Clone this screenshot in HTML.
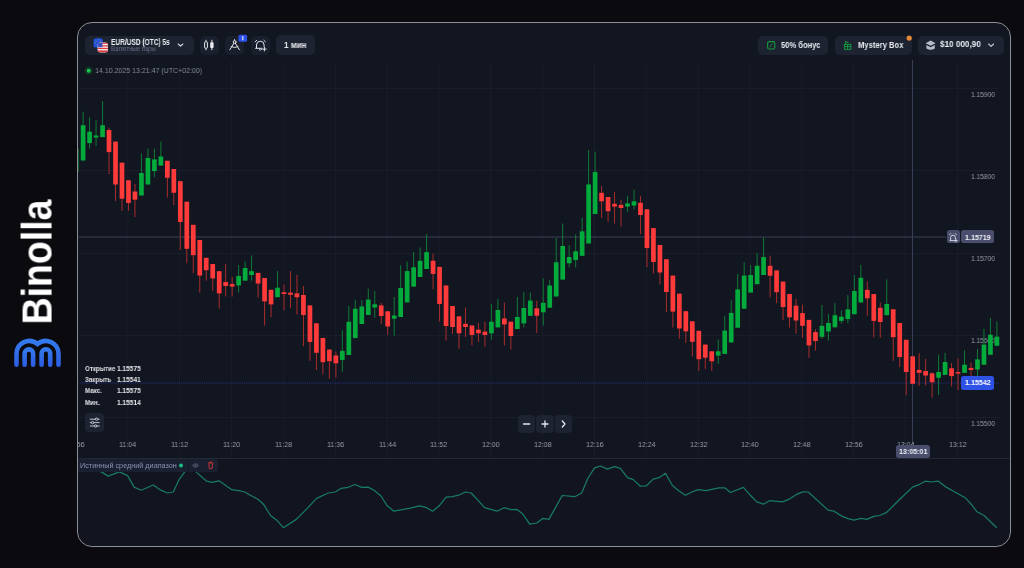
<!DOCTYPE html>
<html><head><meta charset="utf-8">
<style>
*{margin:0;padding:0;box-sizing:border-box}
html,body{width:1024px;height:568px;overflow:hidden;background:#0a0a0f;font-family:"Liberation Sans",sans-serif}
.abs{position:absolute}
#frame{position:absolute;left:77px;top:22px;width:934px;height:525px;border:1.7px solid #8e8e96;border-radius:15px;background:#121620}
svg{position:absolute;left:0;top:0}
.pill{position:absolute;background:#1d2331;border-radius:5px}
.btn{position:absolute;background:#1a1f2d;border-radius:5px}
.t{position:absolute;white-space:nowrap;line-height:1;transform-origin:0 0;will-change:transform}
</style></head><body>
<div class="t" style="left:0;top:0;font-size:41.6px;font-weight:bold;color:#fff;transform:translate(16.57px,324.4px) rotate(-90deg) scaleX(0.9)">Binolla</div>
<svg width="1024" height="568" viewBox="0 0 1024 568">
 <defs><linearGradient id="lg" x1="0" y1="0" x2="0" y2="1"><stop offset="0" stop-color="#3479ec"/><stop offset="1" stop-color="#2d5fe4"/></linearGradient></defs>
 <g fill="none" stroke="url(#lg)" stroke-width="4.6" stroke-linecap="round">
  <path d="M16.5,364.7 V353.8 A12.8,12.8 0 0 1 37.5,343.97 A12.8,12.8 0 0 1 58.5,353.8 V364.7"/>
  <path d="M24.6,364.7 V353.6 A4.25,4.25 0 0 1 33.1,353.6 V364.7"/>
  <path d="M41.6,364.7 V353.6 A4.3,4.3 0 0 1 50.2,353.6 V364.7"/>
 </g>
</svg>
<div id="frame"></div>
<svg width="1024" height="568" viewBox="0 0 1024 568">
 <defs><clipPath id="fc"><rect x="78.5" y="23.5" width="931" height="522" rx="14"/></clipPath></defs>
 <g clip-path="url(#fc)">
 <rect x="78" y="459" width="932" height="88" fill="#121420"/>
 <line x1="78" y1="88.5" x2="998" y2="88.5" stroke="#1a1d2b" stroke-width="1"/>
<line x1="78" y1="170.5" x2="998" y2="170.5" stroke="#1a1d2b" stroke-width="1"/>
<line x1="78" y1="253.5" x2="998" y2="253.5" stroke="#1a1d2b" stroke-width="1"/>
<line x1="78" y1="335.5" x2="998" y2="335.5" stroke="#1a1d2b" stroke-width="1"/>
<line x1="78" y1="417.5" x2="998" y2="417.5" stroke="#1a1d2b" stroke-width="1"/>
<line x1="127.9" y1="61" x2="127.9" y2="458" stroke="#1a1d2b" stroke-width="1"/>
<line x1="179.7" y1="61" x2="179.7" y2="458" stroke="#1a1d2b" stroke-width="1"/>
<line x1="231.6" y1="61" x2="231.6" y2="458" stroke="#1a1d2b" stroke-width="1"/>
<line x1="283.4" y1="61" x2="283.4" y2="458" stroke="#1a1d2b" stroke-width="1"/>
<line x1="335.3" y1="61" x2="335.3" y2="458" stroke="#1a1d2b" stroke-width="1"/>
<line x1="387.1" y1="61" x2="387.1" y2="458" stroke="#1a1d2b" stroke-width="1"/>
<line x1="439.0" y1="61" x2="439.0" y2="458" stroke="#1a1d2b" stroke-width="1"/>
<line x1="490.8" y1="61" x2="490.8" y2="458" stroke="#1a1d2b" stroke-width="1"/>
<line x1="542.7" y1="61" x2="542.7" y2="458" stroke="#1a1d2b" stroke-width="1"/>
<line x1="594.5" y1="61" x2="594.5" y2="458" stroke="#1a1d2b" stroke-width="1"/>
<line x1="646.3" y1="61" x2="646.3" y2="458" stroke="#1a1d2b" stroke-width="1"/>
<line x1="698.2" y1="61" x2="698.2" y2="458" stroke="#1a1d2b" stroke-width="1"/>
<line x1="750.0" y1="61" x2="750.0" y2="458" stroke="#1a1d2b" stroke-width="1"/>
<line x1="801.9" y1="61" x2="801.9" y2="458" stroke="#1a1d2b" stroke-width="1"/>
<line x1="853.7" y1="61" x2="853.7" y2="458" stroke="#1a1d2b" stroke-width="1"/>
<line x1="905.6" y1="61" x2="905.6" y2="458" stroke="#1a1d2b" stroke-width="1"/>
<line x1="957.4" y1="61" x2="957.4" y2="458" stroke="#1a1d2b" stroke-width="1"/>
 <line x1="78" y1="458.5" x2="1010" y2="458.5" stroke="#232837" stroke-width="1"/>
 <line x1="78" y1="237" x2="946" y2="237" stroke="#3b3f55" stroke-width="1"/>
 <line x1="912.5" y1="60" x2="912.5" y2="445" stroke="#3b3f55" stroke-width="1"/>
 <line x1="78" y1="383" x2="1000" y2="383" stroke="#26307e" stroke-width="1.2" stroke-dasharray="1.2 0.9"/>
 </g>
</svg>
<div style="position:absolute;left:0;top:0;width:1024px;height:568px;clip-path:inset(23.5px 13px 21px 78.5px round 14px)">
<div class="t" style="left:970.96px;top:90.51px;font-size:7.25px;font-weight:normal;color:#9a9fab;transform:scaleX(0.910);">1.15900</div>
<div class="t" style="left:970.96px;top:172.76px;font-size:7.25px;font-weight:normal;color:#9a9fab;transform:scaleX(0.910);">1.15800</div>
<div class="t" style="left:970.96px;top:255.01px;font-size:7.25px;font-weight:normal;color:#9a9fab;transform:scaleX(0.910);">1.15700</div>
<div class="t" style="left:970.96px;top:337.26px;font-size:7.25px;font-weight:normal;color:#9a9fab;transform:scaleX(0.910);">1.15600</div>
<div class="t" style="left:970.96px;top:419.51px;font-size:7.25px;font-weight:normal;color:#9a9fab;transform:scaleX(0.910);">1.15500</div>
<div class="t" style="left:67.46px;top:440.50px;font-size:7.97px;font-weight:normal;color:#9a9fab;transform:scaleX(0.881);">10:56</div>
<div class="t" style="left:119.31px;top:440.50px;font-size:7.97px;font-weight:normal;color:#9a9fab;transform:scaleX(0.881);">11:04</div>
<div class="t" style="left:171.16px;top:440.50px;font-size:7.97px;font-weight:normal;color:#9a9fab;transform:scaleX(0.881);">11:12</div>
<div class="t" style="left:223.01px;top:440.50px;font-size:7.97px;font-weight:normal;color:#9a9fab;transform:scaleX(0.881);">11:20</div>
<div class="t" style="left:274.85px;top:440.50px;font-size:7.97px;font-weight:normal;color:#9a9fab;transform:scaleX(0.881);">11:28</div>
<div class="t" style="left:326.70px;top:440.50px;font-size:7.97px;font-weight:normal;color:#9a9fab;transform:scaleX(0.881);">11:36</div>
<div class="t" style="left:378.55px;top:440.50px;font-size:7.97px;font-weight:normal;color:#9a9fab;transform:scaleX(0.881);">11:44</div>
<div class="t" style="left:430.40px;top:440.50px;font-size:7.97px;font-weight:normal;color:#9a9fab;transform:scaleX(0.881);">11:52</div>
<div class="t" style="left:482.25px;top:440.50px;font-size:7.97px;font-weight:normal;color:#9a9fab;transform:scaleX(0.881);">12:00</div>
<div class="t" style="left:534.09px;top:440.50px;font-size:7.97px;font-weight:normal;color:#9a9fab;transform:scaleX(0.881);">12:08</div>
<div class="t" style="left:585.94px;top:440.50px;font-size:7.97px;font-weight:normal;color:#9a9fab;transform:scaleX(0.881);">12:16</div>
<div class="t" style="left:637.79px;top:440.50px;font-size:7.97px;font-weight:normal;color:#9a9fab;transform:scaleX(0.881);">12:24</div>
<div class="t" style="left:689.64px;top:440.50px;font-size:7.97px;font-weight:normal;color:#9a9fab;transform:scaleX(0.881);">12:32</div>
<div class="t" style="left:741.49px;top:440.50px;font-size:7.97px;font-weight:normal;color:#9a9fab;transform:scaleX(0.881);">12:40</div>
<div class="t" style="left:793.33px;top:440.50px;font-size:7.97px;font-weight:normal;color:#9a9fab;transform:scaleX(0.881);">12:48</div>
<div class="t" style="left:845.18px;top:440.50px;font-size:7.97px;font-weight:normal;color:#9a9fab;transform:scaleX(0.881);">12:56</div>
<div class="t" style="left:897.03px;top:440.50px;font-size:7.97px;font-weight:normal;color:#9a9fab;transform:scaleX(0.881);">13:04</div>
<div class="t" style="left:948.88px;top:440.50px;font-size:7.97px;font-weight:normal;color:#9a9fab;transform:scaleX(0.881);">13:12</div>
</div>
<svg width="1024" height="568" viewBox="0 0 1024 568">
 <g clip-path="url(#fc)">
 <rect x="74.27" y="148.60" width="4.7" height="23.00" fill="#03aa3c"/>
<rect x="82.60" y="111.70" width="1" height="48.80" fill="#0f7a35"/>
<rect x="80.75" y="125.20" width="4.7" height="35.30" fill="#03aa3c"/>
<rect x="89.08" y="117.30" width="1" height="31.30" fill="#0f7a35"/>
<rect x="87.23" y="131.70" width="4.7" height="11.40" fill="#03aa3c"/>
<rect x="95.56" y="120.10" width="1" height="25.70" fill="#0f7a35"/>
<rect x="93.71" y="135.50" width="4.7" height="2.00" fill="#03aa3c"/>
<rect x="102.04" y="101.10" width="1" height="36.00" fill="#0f7a35"/>
<rect x="100.19" y="125.20" width="4.7" height="11.90" fill="#03aa3c"/>
<rect x="108.52" y="127.60" width="1" height="46.40" fill="#a82c2c"/>
<rect x="106.67" y="130.00" width="4.7" height="22.10" fill="#fe3a3a"/>
<rect x="115.00" y="141.60" width="1" height="59.40" fill="#a82c2c"/>
<rect x="113.16" y="141.60" width="4.7" height="42.90" fill="#fe3a3a"/>
<rect x="121.49" y="162.70" width="1" height="48.30" fill="#a82c2c"/>
<rect x="119.64" y="162.70" width="4.7" height="36.00" fill="#fe3a3a"/>
<rect x="127.97" y="180.30" width="1" height="30.70" fill="#a82c2c"/>
<rect x="126.12" y="180.30" width="4.7" height="22.70" fill="#fe3a3a"/>
<rect x="134.45" y="184.00" width="1" height="33.00" fill="#a82c2c"/>
<rect x="132.60" y="191.50" width="4.7" height="8.20" fill="#fe3a3a"/>
<rect x="140.93" y="153.50" width="1" height="42.00" fill="#0f7a35"/>
<rect x="139.08" y="173.00" width="4.7" height="22.50" fill="#03aa3c"/>
<rect x="147.41" y="148.60" width="1" height="35.90" fill="#0f7a35"/>
<rect x="145.56" y="158.00" width="4.7" height="26.50" fill="#03aa3c"/>
<rect x="153.89" y="148.60" width="1" height="28.70" fill="#0f7a35"/>
<rect x="152.04" y="159.40" width="4.7" height="11.70" fill="#03aa3c"/>
<rect x="160.37" y="141.60" width="1" height="24.00" fill="#0f7a35"/>
<rect x="158.52" y="156.50" width="4.7" height="9.10" fill="#03aa3c"/>
<rect x="166.85" y="160.80" width="1" height="36.70" fill="#a82c2c"/>
<rect x="165.00" y="160.80" width="4.7" height="17.00" fill="#fe3a3a"/>
<rect x="173.33" y="169.00" width="1" height="36.00" fill="#a82c2c"/>
<rect x="171.48" y="169.00" width="4.7" height="23.80" fill="#fe3a3a"/>
<rect x="179.81" y="181.20" width="1" height="68.80" fill="#a82c2c"/>
<rect x="177.97" y="181.20" width="4.7" height="40.80" fill="#fe3a3a"/>
<rect x="186.30" y="201.70" width="1" height="61.60" fill="#a82c2c"/>
<rect x="184.45" y="201.70" width="4.7" height="47.10" fill="#fe3a3a"/>
<rect x="192.78" y="224.80" width="1" height="48.30" fill="#a82c2c"/>
<rect x="190.93" y="224.80" width="4.7" height="30.30" fill="#fe3a3a"/>
<rect x="199.26" y="240.00" width="1" height="52.70" fill="#a82c2c"/>
<rect x="197.41" y="240.00" width="4.7" height="35.50" fill="#fe3a3a"/>
<rect x="205.74" y="257.80" width="1" height="22.90" fill="#a82c2c"/>
<rect x="203.89" y="257.80" width="4.7" height="12.40" fill="#fe3a3a"/>
<rect x="212.22" y="264.00" width="1" height="27.00" fill="#a82c2c"/>
<rect x="210.37" y="264.00" width="4.7" height="14.40" fill="#fe3a3a"/>
<rect x="218.70" y="271.20" width="1" height="37.40" fill="#a82c2c"/>
<rect x="216.85" y="271.20" width="4.7" height="22.20" fill="#fe3a3a"/>
<rect x="225.18" y="263.70" width="1" height="32.80" fill="#a82c2c"/>
<rect x="223.33" y="282.10" width="4.7" height="3.90" fill="#fe3a3a"/>
<rect x="231.66" y="277.00" width="1" height="19.50" fill="#a82c2c"/>
<rect x="229.81" y="284.00" width="4.7" height="2.60" fill="#fe3a3a"/>
<rect x="238.14" y="264.90" width="1" height="27.80" fill="#0f7a35"/>
<rect x="236.29" y="276.00" width="4.7" height="9.40" fill="#03aa3c"/>
<rect x="244.62" y="261.30" width="1" height="19.40" fill="#0f7a35"/>
<rect x="242.78" y="268.00" width="4.7" height="12.70" fill="#03aa3c"/>
<rect x="251.11" y="255.40" width="1" height="25.30" fill="#0f7a35"/>
<rect x="249.26" y="271.20" width="4.7" height="3.80" fill="#03aa3c"/>
<rect x="257.59" y="272.90" width="1" height="24.70" fill="#a82c2c"/>
<rect x="255.74" y="272.90" width="4.7" height="10.60" fill="#fe3a3a"/>
<rect x="264.07" y="278.00" width="1" height="47.50" fill="#a82c2c"/>
<rect x="262.22" y="278.00" width="4.7" height="23.40" fill="#fe3a3a"/>
<rect x="270.55" y="289.80" width="1" height="27.20" fill="#a82c2c"/>
<rect x="268.70" y="289.80" width="4.7" height="14.60" fill="#fe3a3a"/>
<rect x="277.03" y="271.20" width="1" height="26.00" fill="#0f7a35"/>
<rect x="275.18" y="287.70" width="4.7" height="9.50" fill="#03aa3c"/>
<rect x="283.51" y="284.50" width="1" height="25.80" fill="#a82c2c"/>
<rect x="281.66" y="292.30" width="4.7" height="1.70" fill="#fe3a3a"/>
<rect x="289.99" y="271.20" width="1" height="36.80" fill="#a82c2c"/>
<rect x="288.14" y="292.70" width="4.7" height="2.00" fill="#fe3a3a"/>
<rect x="296.47" y="275.00" width="1" height="39.50" fill="#a82c2c"/>
<rect x="294.62" y="293.40" width="4.7" height="3.80" fill="#fe3a3a"/>
<rect x="302.95" y="286.00" width="1" height="60.20" fill="#a82c2c"/>
<rect x="301.10" y="295.00" width="4.7" height="20.00" fill="#fe3a3a"/>
<rect x="309.44" y="305.40" width="1" height="55.40" fill="#a82c2c"/>
<rect x="307.58" y="305.40" width="4.7" height="36.50" fill="#fe3a3a"/>
<rect x="315.92" y="323.30" width="1" height="46.80" fill="#a82c2c"/>
<rect x="314.07" y="323.30" width="4.7" height="29.50" fill="#fe3a3a"/>
<rect x="322.40" y="338.00" width="1" height="36.40" fill="#a82c2c"/>
<rect x="320.55" y="338.00" width="4.7" height="24.20" fill="#fe3a3a"/>
<rect x="328.88" y="349.60" width="1" height="29.20" fill="#a82c2c"/>
<rect x="327.03" y="349.60" width="4.7" height="11.60" fill="#fe3a3a"/>
<rect x="335.36" y="351.60" width="1" height="26.10" fill="#a82c2c"/>
<rect x="333.51" y="355.50" width="4.7" height="7.80" fill="#fe3a3a"/>
<rect x="341.84" y="330.30" width="1" height="41.40" fill="#0f7a35"/>
<rect x="339.99" y="350.80" width="4.7" height="9.10" fill="#03aa3c"/>
<rect x="348.32" y="306.00" width="1" height="49.00" fill="#0f7a35"/>
<rect x="346.47" y="321.80" width="4.7" height="33.20" fill="#03aa3c"/>
<rect x="354.80" y="300.00" width="1" height="38.10" fill="#0f7a35"/>
<rect x="352.95" y="308.70" width="4.7" height="29.40" fill="#03aa3c"/>
<rect x="361.28" y="300.00" width="1" height="24.00" fill="#0f7a35"/>
<rect x="359.43" y="306.40" width="4.7" height="17.60" fill="#03aa3c"/>
<rect x="367.76" y="288.70" width="1" height="26.30" fill="#0f7a35"/>
<rect x="365.91" y="299.60" width="4.7" height="15.40" fill="#03aa3c"/>
<rect x="374.25" y="290.80" width="1" height="26.80" fill="#0f7a35"/>
<rect x="372.39" y="304.30" width="4.7" height="3.20" fill="#03aa3c"/>
<rect x="380.73" y="302.80" width="1" height="21.20" fill="#a82c2c"/>
<rect x="378.88" y="305.40" width="4.7" height="10.60" fill="#fe3a3a"/>
<rect x="387.21" y="311.30" width="1" height="23.70" fill="#a82c2c"/>
<rect x="385.36" y="311.30" width="4.7" height="15.20" fill="#fe3a3a"/>
<rect x="393.69" y="297.00" width="1" height="38.60" fill="#0f7a35"/>
<rect x="391.84" y="315.50" width="4.7" height="3.20" fill="#03aa3c"/>
<rect x="400.17" y="265.20" width="1" height="51.80" fill="#0f7a35"/>
<rect x="398.32" y="288.00" width="4.7" height="29.00" fill="#03aa3c"/>
<rect x="406.65" y="261.60" width="1" height="40.80" fill="#0f7a35"/>
<rect x="404.80" y="271.10" width="4.7" height="31.30" fill="#03aa3c"/>
<rect x="413.13" y="252.00" width="1" height="34.60" fill="#0f7a35"/>
<rect x="411.28" y="267.30" width="4.7" height="19.30" fill="#03aa3c"/>
<rect x="419.61" y="247.50" width="1" height="29.50" fill="#0f7a35"/>
<rect x="417.76" y="260.80" width="4.7" height="16.20" fill="#03aa3c"/>
<rect x="426.09" y="234.20" width="1" height="34.80" fill="#0f7a35"/>
<rect x="424.24" y="252.10" width="4.7" height="16.90" fill="#03aa3c"/>
<rect x="432.57" y="253.80" width="1" height="35.50" fill="#a82c2c"/>
<rect x="430.72" y="260.80" width="4.7" height="13.10" fill="#fe3a3a"/>
<rect x="439.05" y="266.90" width="1" height="54.60" fill="#a82c2c"/>
<rect x="437.20" y="266.90" width="4.7" height="37.00" fill="#fe3a3a"/>
<rect x="445.54" y="285.50" width="1" height="55.20" fill="#a82c2c"/>
<rect x="443.69" y="285.50" width="4.7" height="40.50" fill="#fe3a3a"/>
<rect x="452.02" y="306.00" width="1" height="28.00" fill="#a82c2c"/>
<rect x="450.17" y="306.00" width="4.7" height="21.00" fill="#fe3a3a"/>
<rect x="458.50" y="316.40" width="1" height="32.30" fill="#a82c2c"/>
<rect x="456.65" y="316.40" width="4.7" height="16.90" fill="#fe3a3a"/>
<rect x="464.98" y="307.50" width="1" height="29.50" fill="#a82c2c"/>
<rect x="463.13" y="323.80" width="4.7" height="3.20" fill="#fe3a3a"/>
<rect x="471.46" y="325.50" width="1" height="19.90" fill="#a82c2c"/>
<rect x="469.61" y="325.50" width="4.7" height="9.50" fill="#fe3a3a"/>
<rect x="477.94" y="322.70" width="1" height="19.10" fill="#a82c2c"/>
<rect x="476.09" y="329.70" width="4.7" height="3.60" fill="#fe3a3a"/>
<rect x="484.42" y="321.70" width="1" height="24.90" fill="#a82c2c"/>
<rect x="482.57" y="331.60" width="4.7" height="3.40" fill="#fe3a3a"/>
<rect x="490.90" y="304.00" width="1" height="35.60" fill="#0f7a35"/>
<rect x="489.05" y="321.70" width="4.7" height="11.60" fill="#03aa3c"/>
<rect x="497.38" y="298.90" width="1" height="28.50" fill="#0f7a35"/>
<rect x="495.53" y="310.00" width="4.7" height="17.40" fill="#03aa3c"/>
<rect x="503.87" y="302.70" width="1" height="42.70" fill="#a82c2c"/>
<rect x="502.01" y="318.50" width="4.7" height="5.90" fill="#fe3a3a"/>
<rect x="510.35" y="321.70" width="1" height="27.90" fill="#a82c2c"/>
<rect x="508.50" y="321.70" width="4.7" height="14.30" fill="#fe3a3a"/>
<rect x="516.83" y="296.80" width="1" height="32.20" fill="#0f7a35"/>
<rect x="514.98" y="317.00" width="4.7" height="12.00" fill="#03aa3c"/>
<rect x="523.31" y="292.00" width="1" height="35.40" fill="#0f7a35"/>
<rect x="521.46" y="308.00" width="4.7" height="15.40" fill="#03aa3c"/>
<rect x="529.79" y="292.50" width="1" height="23.30" fill="#0f7a35"/>
<rect x="527.94" y="300.60" width="4.7" height="15.20" fill="#03aa3c"/>
<rect x="536.27" y="300.70" width="1" height="32.30" fill="#a82c2c"/>
<rect x="534.42" y="308.30" width="4.7" height="7.40" fill="#fe3a3a"/>
<rect x="542.75" y="278.50" width="1" height="47.10" fill="#0f7a35"/>
<rect x="540.90" y="302.80" width="4.7" height="9.50" fill="#03aa3c"/>
<rect x="549.23" y="280.20" width="1" height="27.50" fill="#0f7a35"/>
<rect x="547.38" y="285.50" width="4.7" height="22.20" fill="#03aa3c"/>
<rect x="555.71" y="238.00" width="1" height="58.50" fill="#0f7a35"/>
<rect x="553.86" y="262.30" width="4.7" height="34.20" fill="#03aa3c"/>
<rect x="562.19" y="223.50" width="1" height="56.10" fill="#0f7a35"/>
<rect x="560.34" y="246.00" width="4.7" height="33.60" fill="#03aa3c"/>
<rect x="568.67" y="245.00" width="1" height="22.50" fill="#0f7a35"/>
<rect x="566.82" y="257.00" width="4.7" height="6.30" fill="#03aa3c"/>
<rect x="575.16" y="234.40" width="1" height="33.10" fill="#0f7a35"/>
<rect x="573.31" y="251.30" width="4.7" height="8.80" fill="#03aa3c"/>
<rect x="581.64" y="217.80" width="1" height="38.00" fill="#0f7a35"/>
<rect x="579.79" y="231.30" width="4.7" height="24.50" fill="#03aa3c"/>
<rect x="588.12" y="150.10" width="1" height="93.40" fill="#0f7a35"/>
<rect x="586.27" y="184.40" width="4.7" height="59.10" fill="#03aa3c"/>
<rect x="594.60" y="151.60" width="1" height="62.40" fill="#0f7a35"/>
<rect x="592.75" y="172.10" width="4.7" height="41.90" fill="#03aa3c"/>
<rect x="601.08" y="186.00" width="1" height="31.80" fill="#a82c2c"/>
<rect x="599.23" y="192.80" width="4.7" height="8.50" fill="#fe3a3a"/>
<rect x="607.56" y="197.00" width="1" height="24.80" fill="#a82c2c"/>
<rect x="605.71" y="197.00" width="4.7" height="14.20" fill="#fe3a3a"/>
<rect x="614.04" y="191.80" width="1" height="31.70" fill="#a82c2c"/>
<rect x="612.19" y="203.80" width="4.7" height="2.80" fill="#fe3a3a"/>
<rect x="620.52" y="199.60" width="1" height="27.00" fill="#a82c2c"/>
<rect x="618.67" y="204.90" width="4.7" height="3.10" fill="#fe3a3a"/>
<rect x="627.00" y="196.00" width="1" height="15.80" fill="#0f7a35"/>
<rect x="625.15" y="203.40" width="4.7" height="3.20" fill="#03aa3c"/>
<rect x="633.49" y="189.60" width="1" height="19.70" fill="#0f7a35"/>
<rect x="631.63" y="201.30" width="4.7" height="4.20" fill="#03aa3c"/>
<rect x="639.97" y="196.00" width="1" height="38.00" fill="#a82c2c"/>
<rect x="638.12" y="202.80" width="4.7" height="12.20" fill="#fe3a3a"/>
<rect x="646.45" y="209.30" width="1" height="57.90" fill="#a82c2c"/>
<rect x="644.60" y="209.30" width="4.7" height="38.70" fill="#fe3a3a"/>
<rect x="652.93" y="228.10" width="1" height="45.40" fill="#a82c2c"/>
<rect x="651.08" y="228.10" width="4.7" height="33.90" fill="#fe3a3a"/>
<rect x="659.41" y="245.00" width="1" height="39.50" fill="#a82c2c"/>
<rect x="657.56" y="245.00" width="4.7" height="27.50" fill="#fe3a3a"/>
<rect x="665.89" y="259.20" width="1" height="53.10" fill="#a82c2c"/>
<rect x="664.04" y="259.20" width="4.7" height="32.80" fill="#fe3a3a"/>
<rect x="672.37" y="275.60" width="1" height="51.90" fill="#a82c2c"/>
<rect x="670.52" y="275.60" width="4.7" height="36.00" fill="#fe3a3a"/>
<rect x="678.85" y="293.70" width="1" height="45.00" fill="#a82c2c"/>
<rect x="677.00" y="293.70" width="4.7" height="34.80" fill="#fe3a3a"/>
<rect x="685.33" y="311.20" width="1" height="31.70" fill="#a82c2c"/>
<rect x="683.48" y="311.20" width="4.7" height="20.10" fill="#fe3a3a"/>
<rect x="691.81" y="321.30" width="1" height="35.30" fill="#a82c2c"/>
<rect x="689.96" y="321.30" width="4.7" height="20.50" fill="#fe3a3a"/>
<rect x="698.29" y="330.80" width="1" height="40.20" fill="#a82c2c"/>
<rect x="696.44" y="330.80" width="4.7" height="28.40" fill="#fe3a3a"/>
<rect x="704.78" y="344.60" width="1" height="24.30" fill="#a82c2c"/>
<rect x="702.93" y="344.60" width="4.7" height="13.10" fill="#fe3a3a"/>
<rect x="711.26" y="351.30" width="1" height="19.70" fill="#a82c2c"/>
<rect x="709.41" y="351.30" width="4.7" height="10.00" fill="#fe3a3a"/>
<rect x="717.74" y="339.30" width="1" height="24.70" fill="#0f7a35"/>
<rect x="715.89" y="351.30" width="4.7" height="4.30" fill="#03aa3c"/>
<rect x="724.22" y="315.80" width="1" height="38.10" fill="#0f7a35"/>
<rect x="722.37" y="330.60" width="4.7" height="23.30" fill="#03aa3c"/>
<rect x="730.70" y="300.20" width="1" height="42.30" fill="#0f7a35"/>
<rect x="728.85" y="312.90" width="4.7" height="29.60" fill="#03aa3c"/>
<rect x="737.18" y="273.80" width="1" height="53.90" fill="#0f7a35"/>
<rect x="735.33" y="289.40" width="4.7" height="38.30" fill="#03aa3c"/>
<rect x="743.66" y="262.30" width="1" height="46.40" fill="#0f7a35"/>
<rect x="741.81" y="275.60" width="4.7" height="33.10" fill="#03aa3c"/>
<rect x="750.14" y="265.10" width="1" height="27.50" fill="#0f7a35"/>
<rect x="748.29" y="275.00" width="4.7" height="17.60" fill="#03aa3c"/>
<rect x="756.62" y="253.10" width="1" height="31.10" fill="#0f7a35"/>
<rect x="754.77" y="265.80" width="4.7" height="18.40" fill="#03aa3c"/>
<rect x="763.11" y="237.30" width="1" height="37.70" fill="#0f7a35"/>
<rect x="761.25" y="257.10" width="4.7" height="17.90" fill="#03aa3c"/>
<rect x="769.59" y="255.60" width="1" height="41.90" fill="#a82c2c"/>
<rect x="767.74" y="265.80" width="4.7" height="9.90" fill="#fe3a3a"/>
<rect x="776.07" y="270.40" width="1" height="32.80" fill="#a82c2c"/>
<rect x="774.22" y="270.40" width="4.7" height="21.80" fill="#fe3a3a"/>
<rect x="782.55" y="281.60" width="1" height="38.40" fill="#a82c2c"/>
<rect x="780.70" y="281.60" width="4.7" height="25.40" fill="#fe3a3a"/>
<rect x="789.03" y="294.00" width="1" height="33.50" fill="#a82c2c"/>
<rect x="787.18" y="294.00" width="4.7" height="23.30" fill="#fe3a3a"/>
<rect x="795.51" y="299.00" width="1" height="34.80" fill="#a82c2c"/>
<rect x="793.66" y="305.70" width="4.7" height="14.80" fill="#fe3a3a"/>
<rect x="801.99" y="304.70" width="1" height="33.10" fill="#a82c2c"/>
<rect x="800.14" y="313.10" width="4.7" height="12.70" fill="#fe3a3a"/>
<rect x="808.47" y="319.90" width="1" height="38.00" fill="#a82c2c"/>
<rect x="806.62" y="319.90" width="4.7" height="25.50" fill="#fe3a3a"/>
<rect x="814.95" y="329.40" width="1" height="21.10" fill="#a82c2c"/>
<rect x="813.10" y="332.10" width="4.7" height="8.90" fill="#fe3a3a"/>
<rect x="821.43" y="305.00" width="1" height="33.50" fill="#0f7a35"/>
<rect x="819.58" y="325.80" width="4.7" height="11.00" fill="#03aa3c"/>
<rect x="827.91" y="314.20" width="1" height="26.40" fill="#0f7a35"/>
<rect x="826.06" y="323.00" width="4.7" height="8.50" fill="#03aa3c"/>
<rect x="834.40" y="303.20" width="1" height="24.10" fill="#0f7a35"/>
<rect x="832.55" y="315.20" width="4.7" height="12.10" fill="#03aa3c"/>
<rect x="840.88" y="310.40" width="1" height="13.30" fill="#0f7a35"/>
<rect x="839.03" y="316.70" width="4.7" height="4.20" fill="#03aa3c"/>
<rect x="847.36" y="295.10" width="1" height="27.90" fill="#0f7a35"/>
<rect x="845.51" y="309.30" width="4.7" height="9.70" fill="#03aa3c"/>
<rect x="853.84" y="275.00" width="1" height="39.20" fill="#0f7a35"/>
<rect x="851.99" y="291.00" width="4.7" height="23.20" fill="#03aa3c"/>
<rect x="860.32" y="264.90" width="1" height="37.60" fill="#0f7a35"/>
<rect x="858.47" y="277.80" width="4.7" height="24.70" fill="#03aa3c"/>
<rect x="866.80" y="281.40" width="1" height="34.20" fill="#a82c2c"/>
<rect x="864.95" y="289.90" width="4.7" height="8.40" fill="#fe3a3a"/>
<rect x="873.28" y="294.10" width="1" height="43.30" fill="#a82c2c"/>
<rect x="871.43" y="294.10" width="4.7" height="26.80" fill="#fe3a3a"/>
<rect x="879.76" y="302.50" width="1" height="35.30" fill="#a82c2c"/>
<rect x="877.91" y="307.80" width="4.7" height="14.20" fill="#fe3a3a"/>
<rect x="886.24" y="279.30" width="1" height="35.90" fill="#0f7a35"/>
<rect x="884.39" y="304.00" width="4.7" height="11.20" fill="#03aa3c"/>
<rect x="892.73" y="309.30" width="1" height="51.50" fill="#a82c2c"/>
<rect x="890.88" y="309.30" width="4.7" height="27.90" fill="#fe3a3a"/>
<rect x="899.21" y="323.00" width="1" height="44.00" fill="#a82c2c"/>
<rect x="897.36" y="323.00" width="4.7" height="34.00" fill="#fe3a3a"/>
<rect x="905.69" y="339.80" width="1" height="55.50" fill="#a82c2c"/>
<rect x="903.84" y="339.80" width="4.7" height="32.20" fill="#fe3a3a"/>
<rect x="910.32" y="356.30" width="4.7" height="27.50" fill="#fe3a3a"/>
<rect x="918.65" y="353.10" width="1" height="32.80" fill="#a82c2c"/>
<rect x="916.80" y="370.00" width="4.7" height="2.80" fill="#fe3a3a"/>
<rect x="925.13" y="358.80" width="1" height="26.60" fill="#a82c2c"/>
<rect x="923.28" y="371.00" width="4.7" height="4.50" fill="#fe3a3a"/>
<rect x="931.61" y="372.40" width="1" height="25.20" fill="#a82c2c"/>
<rect x="929.76" y="373.30" width="4.7" height="8.90" fill="#fe3a3a"/>
<rect x="938.09" y="354.50" width="1" height="40.30" fill="#0f7a35"/>
<rect x="936.24" y="372.00" width="4.7" height="5.80" fill="#03aa3c"/>
<rect x="944.57" y="352.80" width="1" height="22.10" fill="#0f7a35"/>
<rect x="942.72" y="362.00" width="4.7" height="12.90" fill="#03aa3c"/>
<rect x="951.05" y="363.00" width="1" height="23.30" fill="#a82c2c"/>
<rect x="949.20" y="368.30" width="4.7" height="7.80" fill="#fe3a3a"/>
<rect x="957.53" y="358.40" width="1" height="31.60" fill="#a82c2c"/>
<rect x="955.68" y="372.10" width="4.7" height="1.50" fill="#fe3a3a"/>
<rect x="964.02" y="350.40" width="1" height="22.40" fill="#0f7a35"/>
<rect x="962.17" y="364.70" width="4.7" height="8.10" fill="#03aa3c"/>
<rect x="970.50" y="362.20" width="1" height="14.10" fill="#a82c2c"/>
<rect x="968.65" y="367.90" width="4.7" height="2.10" fill="#fe3a3a"/>
<rect x="976.98" y="348.90" width="1" height="27.40" fill="#0f7a35"/>
<rect x="975.13" y="359.40" width="4.7" height="10.00" fill="#03aa3c"/>
<rect x="983.46" y="328.80" width="1" height="35.90" fill="#0f7a35"/>
<rect x="981.61" y="344.60" width="4.7" height="20.10" fill="#03aa3c"/>
<rect x="989.94" y="317.80" width="1" height="37.00" fill="#0f7a35"/>
<rect x="988.09" y="334.70" width="4.7" height="20.10" fill="#03aa3c"/>
<rect x="996.42" y="321.40" width="1" height="24.90" fill="#0f7a35"/>
<rect x="994.57" y="336.60" width="4.7" height="9.10" fill="#03aa3c"/>
 <path d="M78.0,469.0 L90.0,468.0 L101.3,471.9 L108.3,476.1 L119.4,471.9 L127.6,475.6 L134.1,487.1 L141.2,490.2 L153.3,485.0 L160.8,490.2 L167.4,493.0 L173.3,492.0 L179.1,479.6 L186.1,470.2 L190.0,467.0 L195.5,471.4 L206.0,480.8 L211.9,482.4 L219.0,480.8 L231.8,489.7 L238.9,490.6 L244.7,492.0 L251.8,496.0 L257.6,499.0 L263.5,504.2 L270.5,515.5 L277.1,520.6 L283.4,527.7 L296.3,519.4 L306.8,508.9 L316.5,498.4 L328.3,493.0 L335.3,492.0 L341.2,488.3 L348.2,487.3 L354.7,484.5 L361.8,487.3 L368.1,487.1 L374.0,490.2 L381.0,496.0 L386.9,505.4 L393.9,511.2 L409.1,508.4 L419.7,505.9 L426.7,507.7 L432.6,511.2 L439.6,505.4 L446.1,497.2 L452.5,496.7 L459.5,494.8 L465.4,492.0 L471.2,493.0 L478.3,500.7 L484.6,507.7 L497.0,511.2 L504.0,507.7 L511.1,509.6 L516.9,509.4 L522.8,514.1 L529.8,524.1 L536.8,523.0 L543.0,518.3 L548.9,519.4 L562.2,495.5 L574.7,496.7 L581.7,493.0 L588.0,478.0 L594.6,467.9 L600.4,466.0 L607.5,469.1 L614.5,466.7 L620.4,468.4 L627.4,477.7 L633.3,479.6 L640.3,486.2 L646.1,486.0 L653.2,479.1 L659.0,477.7 L665.4,473.3 L672.4,485.5 L679.0,490.9 L685.5,495.3 L691.8,492.0 L698.2,489.7 L705.9,490.6 L718.8,487.8 L724.7,487.8 L730.5,492.5 L743.4,487.3 L750.4,495.3 L756.8,501.9 L763.3,504.2 L769.5,500.7 L782.4,501.9 L789.4,499.1 L796.5,494.4 L803.0,491.8 L808.2,492.0 L828.1,510.1 L834.0,511.2 L842.2,516.4 L848.0,518.7 L853.9,520.2 L860.9,518.3 L866.8,519.4 L873.8,516.4 L879.7,515.5 L886.7,512.4 L899.6,499.5 L912.5,487.1 L919.5,484.3 L925.4,481.2 L931.2,482.0 L938.3,481.2 L945.3,486.6 L953.5,491.3 L965.2,497.7 L971.1,504.2 L976.9,511.7 L984.0,515.5 L996.8,527.7" fill="none" stroke="#187a68" stroke-width="1.25" stroke-linejoin="round"/>
 </g>
</svg>
<!-- toolbar -->
<div class="pill" style="left:85px;top:35.5px;width:109px;height:19.7px"></div>
<svg width="1024" height="568" viewBox="0 0 1024 568" style="z-index:3">
 <rect x="93.5" y="38.2" width="9.4" height="9.4" rx="2.6" fill="#2150d8"/>
 <g fill="#d9c23a"><circle cx="98.2" cy="39.8" r="0.45"/><circle cx="100.3" cy="41" r="0.45"/><circle cx="96.1" cy="41" r="0.45"/><circle cx="95.3" cy="43" r="0.45"/></g>
 <rect x="97.6" y="42.6" width="10.4" height="9.8" rx="2.6" fill="#f3f3f5"/>
 <clipPath id="us"><rect x="97.6" y="42.6" width="10.4" height="9.8" rx="2.6"/></clipPath>
 <g clip-path="url(#us)" fill="#e03a3e">
  <rect x="97.6" y="42.6" width="10.4" height="1.3"/><rect x="97.6" y="45.2" width="10.4" height="1.3"/><rect x="97.6" y="47.8" width="10.4" height="1.3"/><rect x="97.6" y="50.4" width="10.4" height="2"/>
  <rect x="97.6" y="42.6" width="4.8" height="4.6" fill="#3850b8"/>
 </g>
 <path d="M178.2,44 L180.5,46.2 L182.8,44" fill="none" stroke="#d8dbe2" stroke-width="1.1" stroke-linecap="round" stroke-linejoin="round"/>
</svg>

<div class="btn" style="left:200.2px;top:35.5px;width:18.5px;height:19.3px"></div>
<div class="btn" style="left:224.8px;top:35.5px;width:19.2px;height:19.3px"></div>
<div class="btn" style="left:250.7px;top:35.5px;width:18.9px;height:19.3px"></div>
<div class="pill" style="left:276px;top:35.4px;width:39px;height:19.9px"></div>
<svg width="1024" height="568" viewBox="0 0 1024 568" style="z-index:3">
 <g stroke="#e8eaf0" stroke-width="1" fill="none">
  <rect x="204.6" y="41.8" width="2.8" height="6.4" rx="0.8"/>
  <line x1="206" y1="39.8" x2="206" y2="41.8"/><line x1="206" y1="48.2" x2="206" y2="50.2"/>
  <line x1="211.9" y1="39.8" x2="211.9" y2="50.2"/>
 </g>
 <rect x="210.2" y="42.2" width="3.4" height="5.8" rx="0.8" fill="#e8eaf0"/>
 <g stroke="#e0e3ea" stroke-width="1" fill="none" stroke-linecap="round">
  <circle cx="234.6" cy="42" r="1.4"/>
  <path d="M233.8,43.3 L229.8,49.8 M235.4,43.3 L239.4,49.8 M231.2,46.6 Q234.6,48.6 238,46.6"/>
  <line x1="234.6" y1="39.6" x2="234.6" y2="40.6"/>
 </g>
 <rect x="238.5" y="34.8" width="8.6" height="6.9" rx="1.5" fill="#2d50e8"/>
 <rect x="242.3" y="36.1" width="1" height="4.2" fill="#fff"/>
 <g stroke="#e0e3ea" stroke-width="1" fill="none" stroke-linecap="round">
  <path d="M256.5,48 V45 A3.8,3.8 0 0 1 264.1,45 V46.5 M255.6,48.3 H262"/>
  <path d="M255.2,41.8 L256.7,40.3 M265.4,41.8 L263.9,40.3 M259.2,49.7 Q260.3,50.8 261.4,49.7"/>
  <path d="M264.4,47.3 V50.9 M262.6,49.1 H266.2"/>
 </g>
</svg>

<div class="pill" style="left:758px;top:35.5px;width:70.3px;height:19.4px"></div>
<div class="pill" style="left:834.7px;top:35.5px;width:77px;height:19.4px"></div>
<div class="pill" style="left:917.7px;top:35.6px;width:86.5px;height:19.4px"></div>
<svg width="1024" height="568" viewBox="0 0 1024 568" style="z-index:3">
 <rect x="767.6" y="41.6" width="7.2" height="7.4" rx="1.6" fill="none" stroke="#14993f" stroke-width="1.1"/>
 <path d="M769.6,47.2 L772.8,43.4" stroke="#14993f" stroke-width="0.8"/>
 <g fill="none" stroke="#14993f" stroke-width="1">
  <rect x="844.4" y="44.4" width="6.4" height="5" />
  <line x1="844.4" y1="46.6" x2="850.8" y2="46.6"/><line x1="847.6" y1="44.4" x2="847.6" y2="49.4"/>
  <path d="M845.4,44.2 L845.4,41.6 L848.6,42.8"/>
 </g>
 <circle cx="909.2" cy="38.1" r="2.6" fill="#e6893b"/>
 <path d="M930.6,40.6 L935.6,43.2 L930.6,45.8 L925.6,43.2 Z" fill="#b9bdc9"/>
 <path d="M926.4,45 V48.4 Q930.6,51.2 934.8,48.4 V45 L930.6,47.2 Z" fill="#b9bdc9"/>
 <path d="M988.6,44 L991.1,46.3 L993.6,44" fill="none" stroke="#c8ccd6" stroke-width="1.1" stroke-linecap="round" stroke-linejoin="round"/>
 <circle cx="88.7" cy="70.8" r="4" fill="#14c24a" opacity="0.18"/>
 <circle cx="88.7" cy="70.8" r="2" fill="#19c44d"/>
</svg>

<!-- OHLC info -->
<div class="pill" style="left:85.3px;top:413px;width:18.8px;height:19.2px;border-radius:4px"></div>
<svg width="1024" height="568" viewBox="0 0 1024 568" style="z-index:3">
 <g stroke="#d4d7df" stroke-width="0.9" fill="#1d2331">
  <line x1="89.8" y1="419.2" x2="99.6" y2="419.2"/><line x1="89.8" y1="422.6" x2="99.6" y2="422.6"/><line x1="89.8" y1="426" x2="99.6" y2="426"/>
  <circle cx="96.6" cy="419.2" r="1.2"/><circle cx="92.6" cy="422.6" r="1.2"/><circle cx="95.6" cy="426" r="1.2"/>
 </g>
</svg>
<!-- zoom buttons -->
<div class="pill" style="left:518.1px;top:414.8px;width:17px;height:18px;border-radius:4px"></div>
<div class="pill" style="left:536px;top:414.8px;width:17.7px;height:18px;border-radius:4px"></div>
<div class="pill" style="left:555.2px;top:414.8px;width:16.7px;height:18px;border-radius:4px"></div>
<svg width="1024" height="568" viewBox="0 0 1024 568" style="z-index:3">
 <g stroke="#e6e8ee" stroke-width="1.3" fill="none" stroke-linecap="round" stroke-linejoin="round">
  <line x1="523.5" y1="424" x2="529.7" y2="424"/>
  <line x1="542" y1="424" x2="548" y2="424"/><line x1="545" y1="421" x2="545" y2="427"/>
  <path d="M562.3,421 L565,424 L562.3,427"/>
 </g>
</svg>
<!-- crosshair labels -->
<div class="abs" style="left:946.5px;top:230.1px;width:13px;height:13.4px;background:#4a4d6c;border-radius:2.5px"></div>
<div class="abs" style="left:961.2px;top:230.1px;width:33.1px;height:13.4px;background:#4a4d6c;border-radius:2.5px"></div>
<div class="t" style="left:964.52px;top:233.79px;font-size:7.39px;font-weight:bold;color:#f0f1f5;transform:scaleX(0.965);">1.15719</div>
<svg width="1024" height="568" viewBox="0 0 1024 568" style="z-index:3">
 <g stroke="#dcdfe6" stroke-width="0.9" fill="none" stroke-linecap="round">
  <path d="M950.6,240.4 V237.6 A2.4,2.4 0 0 1 955.4,237.6 V239 M950,240.6 H954"/>
  <path d="M949.6,234.6 L950.6,233.6 M956.4,234.6 L955.4,233.6"/>
  <path d="M955.8,239.2 V242 M954.4,240.6 H957.2"/>
 </g>
</svg>
<div class="abs" style="left:895.5px;top:445.2px;width:34.1px;height:12.5px;background:#4a4d6c;border-radius:2.5px"></div>
<div class="t" style="left:898.90px;top:447.99px;font-size:7.39px;font-weight:bold;color:#f0f1f5;transform:scaleX(0.965);">13:05:01</div>
<div class="abs" style="left:960.9px;top:376.4px;width:33.5px;height:13.4px;background:#2e52e6;border-radius:2.5px"></div>
<div class="t" style="left:965.02px;top:379.29px;font-size:7.39px;font-weight:bold;color:#ffffff;transform:scaleX(0.965);">1.15542</div>
<!-- indicator header -->
<div class="abs" style="left:78.3px;top:459.2px;width:140px;height:12.8px;background:#1b2030;border-radius:0 3px 3px 0"></div><div class="abs" style="left:188px;top:459.2px;width:0.8px;height:12.8px;background:#151926"></div>
<div class="t" style="left:80.13px;top:461.61px;font-size:7.25px;font-weight:normal;color:#8790b2;transform:scaleX(0.996);">Истинный средний диапазон</div>
<svg width="1024" height="568" viewBox="0 0 1024 568" style="z-index:3">
 <circle cx="181" cy="465.5" r="1.9" fill="#19c08c"/>
 <path d="M192.6,465.5 Q195.6,462.2 198.6,465.5 Q195.6,468.8 192.6,465.5 Z" fill="none" stroke="#5c6478" stroke-width="0.9"/>
 <circle cx="195.6" cy="465.5" r="0.9" fill="#5c6478"/>
 <g stroke="#d33838" stroke-width="0.9" fill="none">
  <path d="M208.2,463 H213.2 M209.8,463 V462 H211.6 V463 M208.8,463.4 L209.3,468.6 H212.1 L212.6,463.4"/>
 </g>
</svg>


<div class="t" style="left:111.21px;top:37.54px;font-size:8.41px;font-weight:bold;color:#eceef2;transform:scaleX(0.781);">EUR/USD (OTC) 5s</div>
<div class="t" style="left:111.44px;top:46.38px;font-size:6.81px;font-weight:normal;color:#687083;transform:scaleX(0.884);">Валютные пары</div>
<div class="t" style="left:284.11px;top:42.46px;font-size:8.26px;font-weight:bold;color:#e6e8ee;transform:scaleX(0.975);">1 мин</div>
<div class="t" style="left:780.68px;top:40.53px;font-size:9.13px;font-weight:bold;color:#e8eaf0;transform:scaleX(0.832);">50% бонус</div>
<div class="t" style="left:857.56px;top:40.53px;font-size:9.13px;font-weight:bold;color:#e8eaf0;transform:scaleX(0.837);">Mystery Box</div>
<div class="t" style="left:939.70px;top:40.21px;font-size:9.28px;font-weight:bold;color:#e8eaf0;transform:scaleX(0.880);">$10 000,90</div>
<div class="t" style="left:94.99px;top:67.00px;font-size:7.97px;font-weight:normal;color:#858b9a;transform:scaleX(0.881);">14.10.2025 13:21:47 (UTC+02:00)</div>
<div class="t" style="left:84.58px;top:364.71px;font-size:7.25px;font-weight:bold;color:#dfe1e6;transform:scaleX(0.853);">Открытие</div>
<div class="t" style="left:84.58px;top:376.01px;font-size:7.25px;font-weight:bold;color:#dfe1e6;transform:scaleX(0.853);">Закрыть</div>
<div class="t" style="left:84.58px;top:387.31px;font-size:7.25px;font-weight:bold;color:#dfe1e6;transform:scaleX(0.853);">Макс.</div>
<div class="t" style="left:84.58px;top:398.61px;font-size:7.25px;font-weight:bold;color:#dfe1e6;transform:scaleX(0.853);">Мин.</div>
<div class="t" style="left:116.73px;top:364.71px;font-size:7.25px;font-weight:bold;color:#e6e8ec;transform:scaleX(0.902);">1.15575</div>
<div class="t" style="left:116.73px;top:376.01px;font-size:7.25px;font-weight:bold;color:#e6e8ec;transform:scaleX(0.902);">1.15541</div>
<div class="t" style="left:116.73px;top:387.31px;font-size:7.25px;font-weight:bold;color:#e6e8ec;transform:scaleX(0.902);">1.15575</div>
<div class="t" style="left:116.73px;top:398.61px;font-size:7.25px;font-weight:bold;color:#e6e8ec;transform:scaleX(0.902);">1.15514</div>

</body></html>
